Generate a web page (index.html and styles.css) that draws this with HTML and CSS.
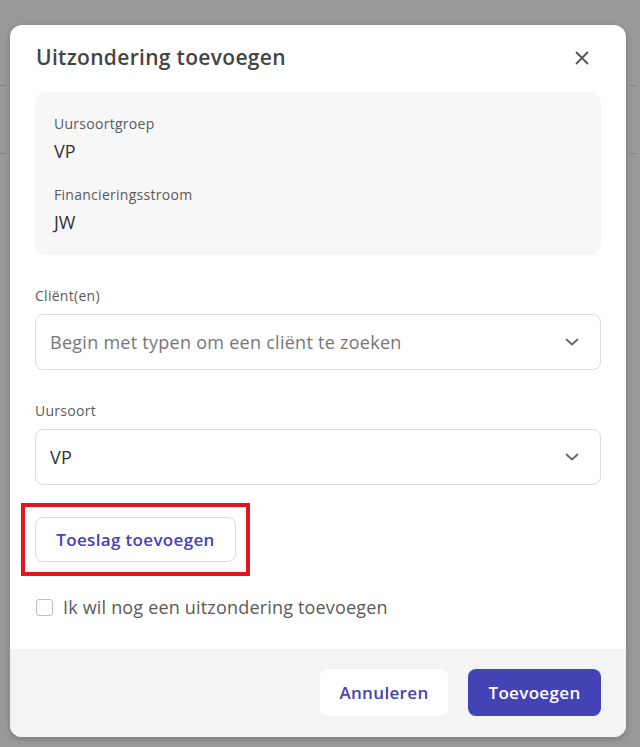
FILE: index.html
```html
<!DOCTYPE html>
<html lang="nl">
<head>
  <meta charset="UTF-8" />
  <meta name="viewport" content="width=device-width, initial-scale=1.0" />
  <title>Uitzondering toevoegen</title>
  <link rel="stylesheet" href="styles.css">
</head>
<body>
  <div class="modal" role="dialog" aria-labelledby="modal-title">
    <header class="modal-header">
      <h2 id="modal-title" class="modal-title">Uitzondering toevoegen</h2>
      <button class="close-btn" type="button" aria-label="Sluiten">
        <svg width="14" height="14" viewBox="0 0 14 14" aria-hidden="true">
          <path d="M1.5 1.5 L12.5 12.5 M12.5 1.5 L1.5 12.5" stroke="currentColor" stroke-width="1.8" stroke-linecap="round" fill="none" />
        </svg>
      </button>
    </header>

    <div class="modal-body">
      <dl class="summary">
        <dt>Uursoortgroep</dt>
        <dd>VP</dd>
        <dt>Financieringsstroom</dt>
        <dd>JW</dd>
      </dl>

      <div class="field">
        <label class="field-label">Cliënt(en)</label>
        <div class="select">
          <span class="select-value placeholder">Begin met typen om een cliënt te zoeken</span>
          <svg class="chevron" width="14" height="8" viewBox="0 0 14 8" aria-hidden="true">
            <path d="M1.5 1.5 L7 6.5 L12.5 1.5" stroke="currentColor" stroke-width="1.8" stroke-linecap="round" stroke-linejoin="round" fill="none" />
          </svg>
        </div>
      </div>

      <div class="field">
        <label class="field-label">Uursoort</label>
        <div class="select">
          <span class="select-value">VP</span>
          <svg class="chevron" width="14" height="8" viewBox="0 0 14 8" aria-hidden="true">
            <path d="M1.5 1.5 L7 6.5 L12.5 1.5" stroke="currentColor" stroke-width="1.8" stroke-linecap="round" stroke-linejoin="round" fill="none" />
          </svg>
        </div>
      </div>

      <div class="extra-row">
        <span class="marker">
          <button class="btn btn-outline" type="button">Toeslag toevoegen</button>
        </span>
      </div>

      <label class="check-row">
        <span class="checkbox"></span>
        <span>Ik wil nog een uitzondering toevoegen</span>
      </label>
    </div>

    <footer class="modal-footer">
      <button class="btn btn-ghost" type="button">Annuleren</button>
      <button class="btn btn-primary" type="button">Toevoegen</button>
    </footer>
  </div>
</body>
</html>
```

FILE: styles.css
```css
:root {
  --overlay: #999999;
  --ink: #333333;
  --muted: #5a5a5a;
  --line: #dcdcdc;
  --accent: #4343b5;
  --soft: #f7f7f7;
}

* { box-sizing: border-box; }

body {
  margin: 0;
  min-height: 100vh;
  padding: 25px 14px 10px 10px;
  font-family: "Open Sans", "Noto Sans", Arial, sans-serif;
  color: var(--ink);
  /* pagina achter de overlay: twee gestippelde tabellijnen */
  background:
    repeating-linear-gradient(90deg, #7d7d7d 0 5px, transparent 5px 10px) 0 85px / 100% 1px no-repeat,
    repeating-linear-gradient(90deg, #7d7d7d 0 5px, transparent 5px 10px) 0 153px / 100% 1px no-repeat,
    var(--overlay);
}

button { font: inherit; cursor: pointer; }

.modal {
  width: 616px;
  height: 712px;
  display: flex;
  flex-direction: column;
  background: #fff;
  border-radius: 12px;
  overflow: hidden;
  box-shadow: 0 2px 6px rgba(0, 0, 0, 0.2);
}

.modal-header {
  height: 25px;
  margin-top: 20px;
  display: flex;
  align-items: center;
  justify-content: space-between;
  padding: 0 25px 0 26px;
}

.modal-title {
  margin: 0;
  font-size: 21px;
  line-height: 25px;
  font-weight: 600;
  color: #444;
  letter-spacing: 0.015em;
}

.close-btn {
  width: 24px;
  height: 24px;
  margin-right: 7px;
  padding: 0;
  display: grid;
  place-items: center;
  border: 0;
  background: none;
  color: #555;
}

.modal-body {
  flex: 1;
  padding: 22px 25px 0;
}

.summary {
  margin: 0;
  padding: 22px 19px 21px;
  background: var(--soft);
  border-radius: 10px;
}

.summary dt {
  font-size: 14px;
  line-height: 20px;
  color: var(--muted);
  letter-spacing: 0.02em;
}

.summary dd {
  margin: 5px 0 0;
  font-size: 18px;
  line-height: 24px;
  color: var(--ink);
}

.summary dd + dt { margin-top: 22px; }

.field { margin-top: 31px; }

.field-label {
  display: block;
  margin-bottom: 8px;
  font-size: 14px;
  line-height: 20px;
  color: var(--muted);
  letter-spacing: 0.02em;
}

.select {
  height: 56px;
  display: flex;
  align-items: center;
  justify-content: space-between;
  padding: 0 21px 0 14px;
  border: 1px solid var(--line);
  border-radius: 8px;
  background: #fff;
}

.select-value {
  font-size: 18px;
  color: var(--ink);
  letter-spacing: 0.015em;
}

.select-value.placeholder { color: #777; }

.chevron { color: #666; }

.extra-row { margin-top: 32px; }

/* rode markering uit de schermafbeelding, zonder ronde hoeken */
.marker {
  display: inline-block;
  margin: -14px;
  padding: 10px;
  border: 4px solid #e3161d;
}

.btn {
  height: 47px;
  padding: 0;
  border-radius: 8px;
  font-size: 17px;
  font-weight: 600;
  letter-spacing: 0.02em;
}

.btn-outline {
  display: block;
  width: 201px;
  height: 45px;
  background: #fff;
  border: 1px solid var(--line);
  color: var(--accent);
}

.check-row {
  display: flex;
  align-items: center;
  gap: 10px;
  margin-top: 35px;
  margin-left: 1px;
  font-size: 18px;
  line-height: 20px;
  color: var(--muted);
  letter-spacing: 0.01em;
}

.checkbox {
  width: 17px;
  height: 17px;
  border: 1.5px solid #bdbdbd;
  border-radius: 3px;
  background: #fff;
}

.modal-footer {
  height: 88px;
  display: flex;
  justify-content: flex-end;
  align-items: flex-start;
  gap: 20px;
  padding: 20px 25px 0;
  background: #f4f4f4;
}

.btn-ghost {
  width: 128px;
  border: 0;
  background: #fff;
  color: var(--accent);
}

.btn-primary {
  width: 133px;
  border: 0;
  background: var(--accent);
  color: #fff;
}
```
